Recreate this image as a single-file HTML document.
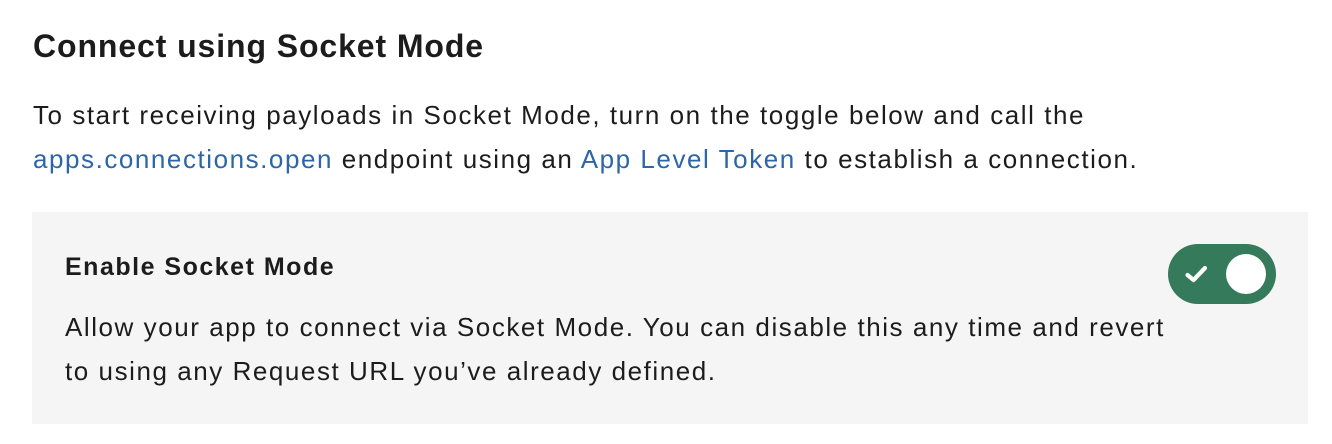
<!DOCTYPE html>
<html><head><style>
body{margin:0;width:1332px;height:444px;background:#fff;font-family:"Liberation Sans",sans-serif;color:#1d1c1d;position:relative;overflow:hidden}
.a{position:absolute;white-space:nowrap}
h1{position:absolute;left:33px;top:27px;margin:0;font-size:32px;font-weight:bold;line-height:38px;letter-spacing:0.9px;white-space:nowrap}
.p{font-size:26px;line-height:30px;letter-spacing:1.55px}
a{text-decoration:none;color:#2c66a8}
.box{position:absolute;left:32px;top:212px;width:1276px;height:212px;background:#f5f5f5}
.tog{position:absolute;left:1168px;top:244px;width:108px;height:60px;border-radius:30px;background:#357a5b}
.knob{position:absolute;right:10px;top:10px;width:40px;height:40px;border-radius:50%;background:#fff}
</style></head><body>
<h1>Connect using Socket Mode</h1>
<div class="a p" style="left:33px;top:100px">To start receiving payloads in Socket Mode, turn on the toggle below and call the</div>
<div class="a p" style="left:33px;top:144px"><a>apps.connections.open</a> endpoint using an <a>App Level Token</a> to establish a connection.</div>
<div class="box"></div>
<div class="a" style="left:65px;top:252px;font-size:25px;font-weight:bold;line-height:30px;letter-spacing:1.5px">Enable Socket Mode</div>
<div class="a p" style="left:65px;top:312px">Allow your app to connect via Socket Mode. You can disable this any time and revert</div>
<div class="a p" style="left:65px;top:356px">to using any Request URL you’ve already defined.</div>
<div class="tog"><svg style="position:absolute;left:16px;top:20px" width="26" height="20" viewBox="0 0 26 20"><path d="M3.5 11 L9.5 16 L21 4" fill="none" stroke="#fff" stroke-width="4.2" stroke-linecap="round" stroke-linejoin="round"/></svg><div class="knob"></div></div>
</body></html>
